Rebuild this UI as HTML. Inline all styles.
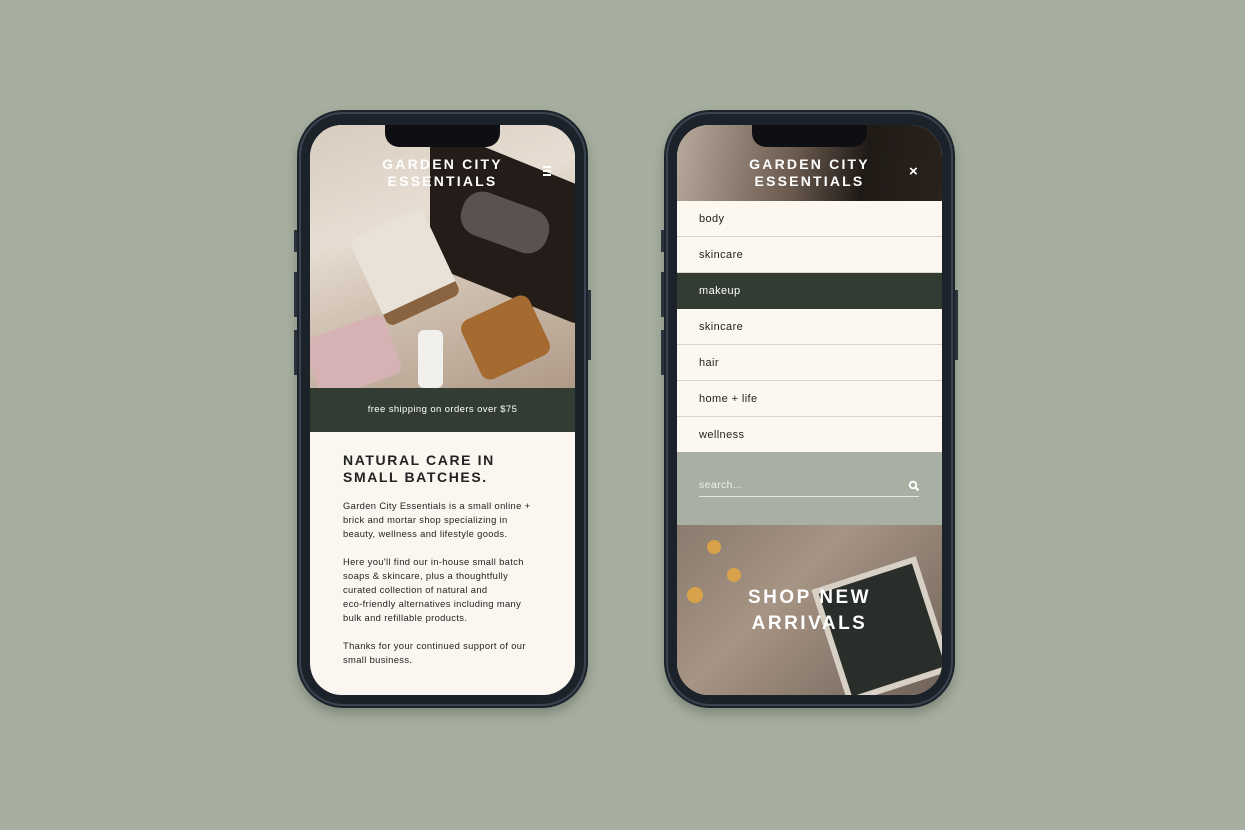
<!DOCTYPE html>
<html><head><meta charset="utf-8"><style>
*{margin:0;padding:0;box-sizing:border-box}
body{width:1245px;height:830px;background:#a6ae9f;position:relative;overflow:hidden;font-family:"Liberation Sans",sans-serif}
.phone{position:absolute;top:110px;width:291px;height:598px;border-radius:46px;background:#1c222a;box-shadow:0 6px 10px rgba(60,70,60,.35);}
.phone:before{content:"";position:absolute;inset:2px;border-radius:44px;border:2px solid #3a4450}
.screen{position:absolute;left:13px;top:15px;width:265px;height:570px;border-radius:32px;overflow:hidden;background:#fbf7f0}
.notch{position:absolute;left:75px;top:0;width:115px;height:22px;background:#0d0f12;border-radius:0 0 14px 14px;z-index:5}
.btn{position:absolute;width:3px;background:#2a323b}
.logo{position:absolute;left:0;right:0;text-align:center;color:#fff;font-weight:bold;font-size:14px;letter-spacing:2.2px;line-height:17px;z-index:4}
.menu div{height:36px;line-height:37px;padding-left:22px;font-size:11px;letter-spacing:.4px;color:#222;border-bottom:1px solid #d8d4cc;background:#fdf8ef}
</style></head><body>

<div class="phone" style="left:297px">
<div class="btn" style="left:-3px;top:120px;height:22px"></div>
<div class="btn" style="left:-3px;top:162px;height:45px"></div>
<div class="btn" style="left:-3px;top:220px;height:45px"></div>
<div class="btn" style="right:-3px;top:180px;height:70px"></div>
<div class="screen">
<div class="notch"></div>
<div style="position:absolute;left:0;top:0;width:265px;height:263px;background:linear-gradient(160deg,#d8ccbf 0%,#e7ddd2 35%,#cfc0b0 60%,#b09a88 100%)"></div>
<div style="position:absolute;left:120px;top:0;width:160px;height:140px;background:#241c18;transform:skewY(22deg);transform-origin:left top;border-radius:0 0 20px 20px"></div>
<div style="position:absolute;left:150px;top:75px;width:90px;height:45px;background:#5a5250;border-radius:20px;transform:rotate(20deg)"></div>
<div style="position:absolute;left:55px;top:95px;width:80px;height:95px;background:#e8e2d8;border-radius:8px;transform:rotate(-25deg);border-bottom:14px solid #8a6440"></div>
<div style="position:absolute;left:158px;top:180px;width:75px;height:65px;background:#a46a30;border-radius:10px;transform:rotate(-25deg)"></div>
<div style="position:absolute;left:0;top:200px;width:85px;height:63px;background:#d6b2b4;border-radius:8px;transform:rotate(-20deg)"></div>
<div style="position:absolute;left:108px;top:205px;width:25px;height:58px;background:#f2f0ec;border-radius:6px"></div>
<div class="logo" style="top:31px">GARDEN CITY<br>ESSENTIALS</div>
<div style="position:absolute;left:233px;top:41px;width:8px;height:10px;border-top:2px solid #fff;border-bottom:2px solid #fff;z-index:4"><div style="margin-top:2px;height:2px;background:#fff"></div></div>
<div style="position:absolute;left:0;top:263px;width:265px;height:44px;background:#333c33;color:#fff;font-size:9.5px;letter-spacing:.4px;text-align:center;line-height:44px">free shipping on orders over $75</div>
<div style="position:absolute;left:33px;top:327px;width:220px;color:#222;">
<div style="font-size:14px;font-weight:bold;letter-spacing:1.6px;line-height:17px">NATURAL CARE IN<br>SMALL BATCHES.</div>
<div style="font-size:9.4px;letter-spacing:.35px;line-height:14px;margin-top:13px">Garden City Essentials is a small online +<br>brick and mortar shop specializing in<br>beauty, wellness and lifestyle goods.<br><br>Here you'll find our in-house small batch<br>soaps &amp; skincare, plus a thoughtfully<br>curated collection of natural and<br>eco-friendly alternatives including many<br>bulk and refillable products.<br><br>Thanks for your continued support of our<br>small business.</div>
</div>
</div></div>

<div class="phone" style="left:664px">
<div class="btn" style="left:-3px;top:120px;height:22px"></div>
<div class="btn" style="left:-3px;top:162px;height:45px"></div>
<div class="btn" style="left:-3px;top:220px;height:45px"></div>
<div class="btn" style="right:-3px;top:180px;height:70px"></div>
<div class="screen">
<div class="notch"></div>
<div style="position:absolute;left:0;top:0;width:265px;height:76px;background:linear-gradient(100deg,#b8aa9c 0%,#6a5a4e 45%,#201a16 70%,#2a221c 100%)"></div>
<div class="logo" style="top:31px">GARDEN CITY<br>ESSENTIALS</div>
<div style="position:absolute;left:232px;top:38px;color:#fff;font-size:15px;font-weight:bold;z-index:4">×</div>
<div class="menu" style="position:absolute;left:0;top:76px;width:265px">
<div>body</div><div>skincare</div><div style="background:#333c33;color:#fff;border-color:#333c33">makeup</div><div>skincare</div><div>hair</div><div>home + life</div><div style="border:none">wellness</div>
</div>
<div style="position:absolute;left:0;top:327px;width:265px;height:73px;background:#a7b0a2"></div>
<div style="position:absolute;left:22px;top:354px;width:220px;height:18px;border-bottom:1px solid #e6e8e0;color:#eef0ea;font-size:10.5px;letter-spacing:.4px">search...</div>
<svg style="position:absolute;left:231px;top:355px" width="12" height="12" viewBox="0 0 12 12"><circle cx="5" cy="5" r="3.3" fill="none" stroke="#fff" stroke-width="1.8"/><path d="M7.5 7.5L10.5 10.5" stroke="#fff" stroke-width="2"/></svg>
<div style="position:absolute;left:0;top:400px;width:265px;height:170px;background:linear-gradient(135deg,#8a7b6e 0%,#a69484 40%,#6f6258 100%)"></div>
<div style="position:absolute;left:150px;top:445px;width:110px;height:120px;background:#2a2e2a;transform:rotate(-18deg);border:6px solid #d8d0c4"></div>
<div style="position:absolute;left:30px;top:415px;width:14px;height:14px;border-radius:50%;background:#d9a24a"></div>
<div style="position:absolute;left:50px;top:443px;width:14px;height:14px;border-radius:50%;background:#d9a24a"></div>
<div style="position:absolute;left:10px;top:462px;width:16px;height:16px;border-radius:50%;background:#d9a24a"></div>
<div style="position:absolute;left:0;top:460px;width:265px;text-align:center;color:#fff;font-weight:bold;font-size:19px;letter-spacing:2.5px;line-height:26px">SHOP NEW<br>ARRIVALS</div>
</div></div>
</body></html>
